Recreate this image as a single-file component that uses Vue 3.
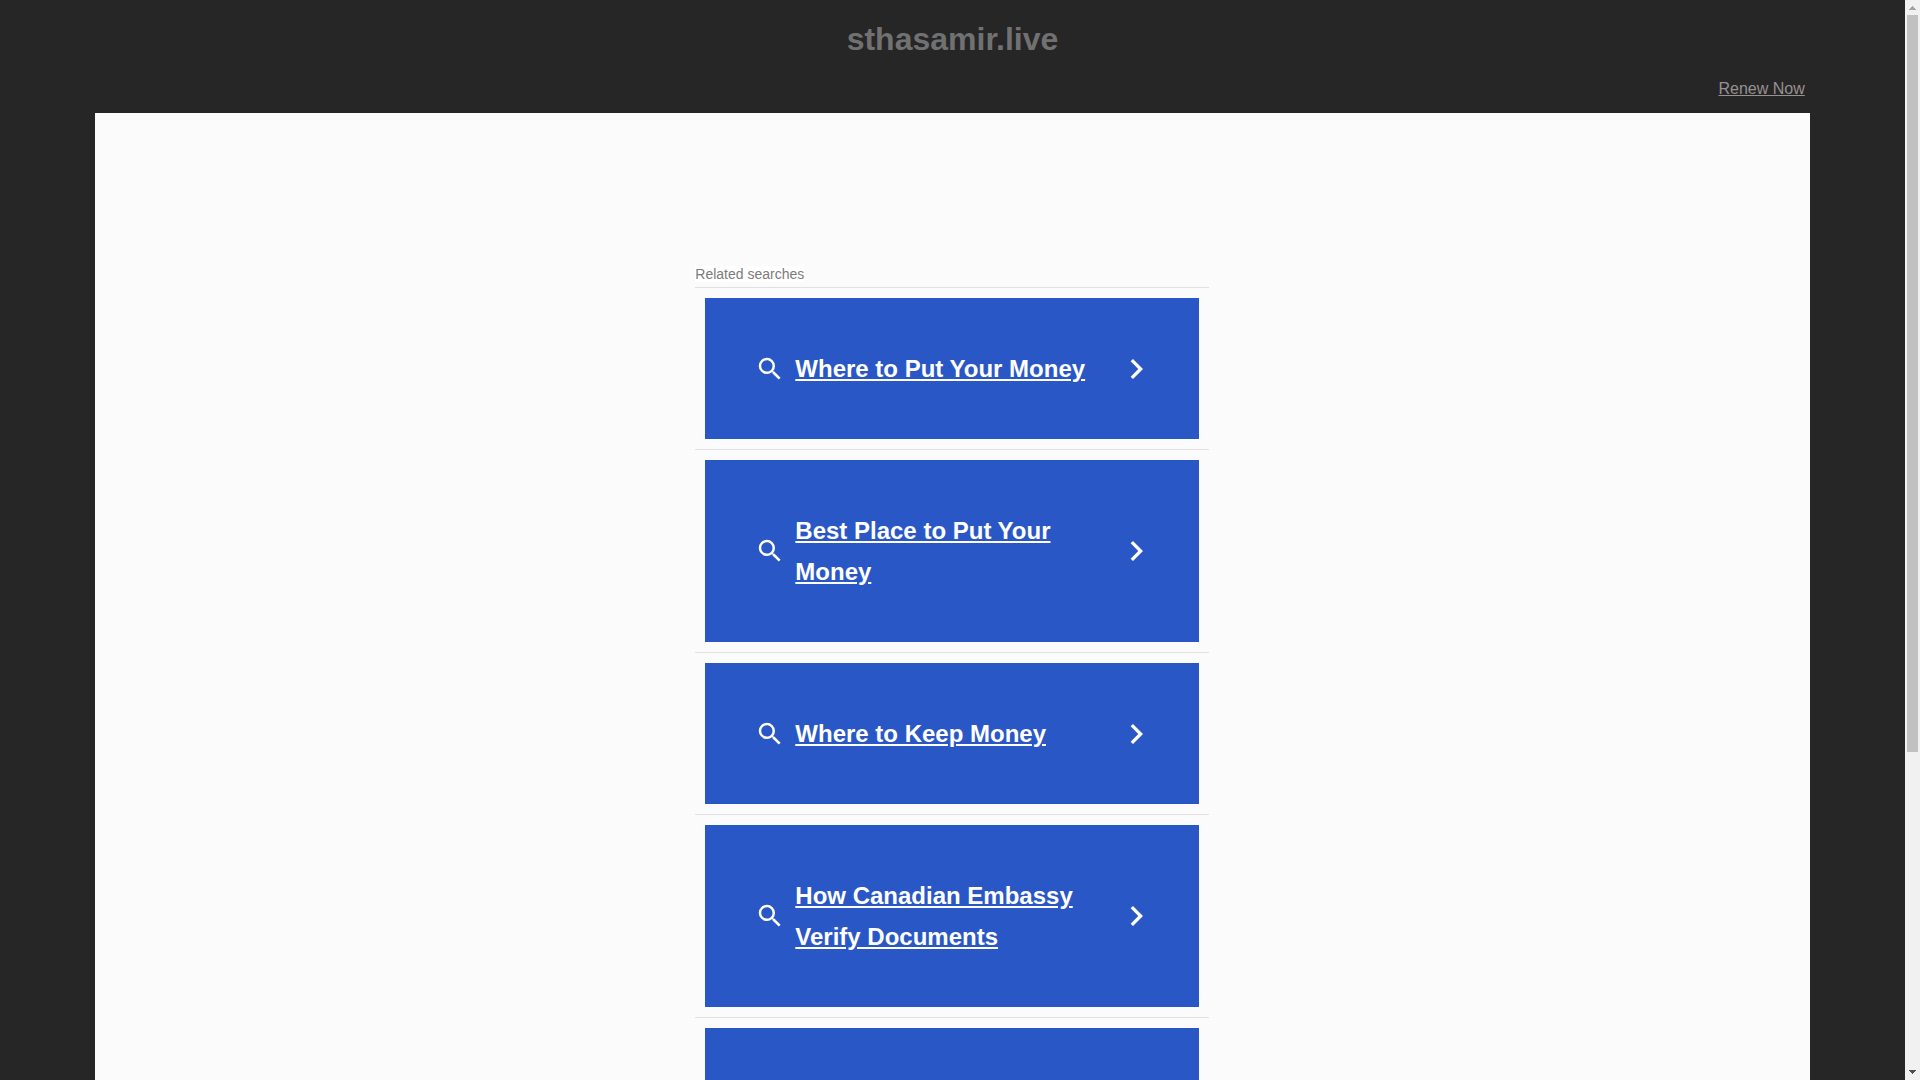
<script setup>
const searches = [
  'Where to Put Your Money',
  'Best Place to Put Your Money',
  'Where to Keep Money',
  'How Canadian Embassy Verify Documents',
  '',
]
</script>

<template>
  <div class="window">
    <div class="page">
      <header class="header">
        <h1 class="domain">sthasamir.live</h1>
        <div class="renew"><a href="#">Renew Now</a></div>
      </header>
      <main class="panel">
        <section class="related">
          <h2 class="heading"><span>Related searches</span></h2>
          <ul class="list">
            <li v-for="(label, i) in searches" :key="i" class="item">
              <a href="#" class="card">
                <svg class="search" viewBox="0 0 24 24" aria-hidden="true">
                  <path d="M15.5 14h-.79l-.28-.27A6.471 6.471 0 0 0 16 9.500 6.500 6.500 0 1 0 9.500 16c1.610 0 3.090-.590 4.230-1.570l.270.280v.790l5 4.990L20.490 19l-4.990-5zm-6 0C7.010 14 5 11.990 5 9.500S7.010 5 9.500 5 14 7.010 14 9.500 11.990 14 9.500 14z" />
                </svg>
                <span class="label">{{ label }}</span>
                <svg class="arrow" viewBox="0 0 24 24" aria-hidden="true">
                  <path d="M8 2L5.650 4.350 13.300 12l-7.650 7.650L8 22l10-10z" />
                </svg>
              </a>
            </li>
          </ul>
        </section>
      </main>
    </div>
    <div class="scrollbar" aria-hidden="true">
      <svg class="step up" viewBox="0 0 15 15" shape-rendering="crispEdges">
        <path d="M7 6h1v1h1v1h1v1h1v1H4V9h1V8h1V7h1z" />
      </svg>
      <div class="track"><div class="thumb"></div></div>
      <svg class="step down" viewBox="0 0 15 15" shape-rendering="crispEdges">
        <path d="M4 5h7v1h-1v1H9v1H8v1H7V8H6V7H5V6H4z" />
      </svg>
    </div>
  </div>
</template>

<style>
body {
  background: #262626;
}
</style>

<style scoped>
.window {
  display: flex;
  height: 100vh;
  overflow: hidden;
  background: #262626;
  font-family: "Liberation Sans", Arial, sans-serif;
}
.page {
  flex: 1;
  min-width: 0;
  overflow: hidden;
}
.header {
  width: 90%;
  margin: 0 auto;
}
.domain {
  margin: 0;
  padding: 20px 0;
  font-size: 32px;
  line-height: 38px;
  text-align: center;
  color: #717171;
}
.renew {
  padding: 1px 5px 14px;
  font-size: 16px;
  line-height: 20px;
  text-align: right;
}
.renew a {
  color: #999092;
}
.panel {
  width: 90%;
  min-height: 100vh;
  margin: 0 auto;
  padding-top: 150px;
  box-sizing: border-box;
  background: #fbfbfb;
}
.related {
  width: 30%;
  max-width: 514px;
  margin-left: 35%;
}
.heading {
  margin: 0;
  padding: 3px 0 5px;
  font-size: 14px;
  font-weight: 400;
  line-height: 16px;
  color: #7b7b7b;
}
.heading span {
  background: #fff;
}
.list {
  margin: 0;
  padding: 0;
  list-style: none;
}
.item {
  padding: 10px;
  border-top: 1px solid #e1e1e1;
}
.card {
  display: flex;
  align-items: center;
  gap: 10px;
  padding: 50px;
  background: #2a57c6;
  color: #fff;
  font-size: 24px;
  font-weight: 700;
  line-height: 41px;
}
.card svg {
  flex: none;
  fill: currentColor;
}
.label {
  flex: 1;
  min-height: 41px;
}
.search {
  width: 30px;
  height: 30px;
}
.arrow {
  width: 24px;
  height: 24px;
}
.scrollbar {
  display: flex;
  flex-direction: column;
  width: 15px;
  background: #f1f1f1;
}
.step {
  width: 15px;
  height: 15px;
}
.up {
  fill: #a3a3a3;
}
.down {
  fill: #505050;
}
.track {
  flex: 1;
  padding: 0 2px;
}
.thumb {
  height: 70.2%;
  background: #c1c1c1;
}
</style>
